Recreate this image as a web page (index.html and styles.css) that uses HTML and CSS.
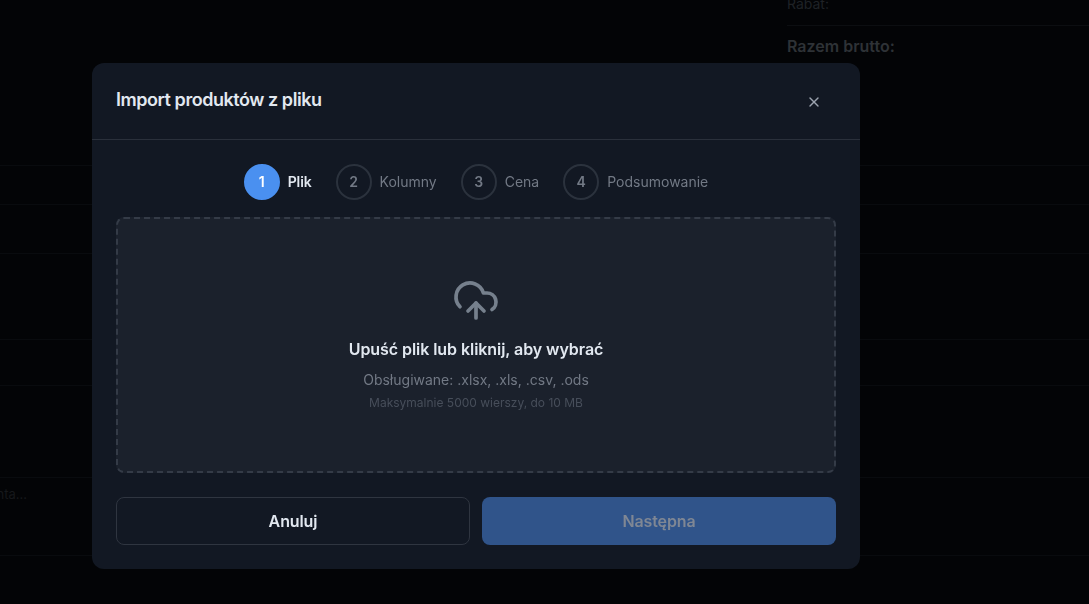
FILE: index.html
```html
<!DOCTYPE html>
<html lang="pl">
<head>
    <meta charset="UTF-8">
    <meta name="viewport" content="width=device-width, initial-scale=1.0">
    <title>Import produktów z pliku</title>
    <link rel="stylesheet" href="styles.css">
</head>
<body>
    <div class="page">
        <div class="summary">
            <div class="summary-row">Rabat:</div>
            <div class="summary-total">Razem brutto:</div>
        </div>
        <div class="row row-40"></div>
        <div class="row row-48"></div>
        <div class="row row-86"></div>
        <div class="row row-46"></div>
        <div class="row row-92"></div>
        <div class="row row-78"><span class="row-note">Uwagi dla klienta...</span></div>
    </div>

    <div class="overlay">
        <div class="modal">
            <div class="modal-header">
                <h2>Import produktów z pliku</h2>
                <button class="close-btn" aria-label="Zamknij">
                    <svg width="16" height="16" viewBox="0 0 24 24" fill="none" stroke="currentColor" stroke-width="2" stroke-linecap="round">
                        <path d="M18 6 6 18"/>
                        <path d="m6 6 12 12"/>
                    </svg>
                </button>
            </div>
            <div class="modal-body">
                <div class="steps">
                    <div class="step active"><span class="step-num">1</span><span class="step-label">Plik</span></div>
                    <div class="step"><span class="step-num">2</span><span class="step-label">Kolumny</span></div>
                    <div class="step"><span class="step-num">3</span><span class="step-label">Cena</span></div>
                    <div class="step"><span class="step-num">4</span><span class="step-label">Podsumowanie</span></div>
                </div>
                <div class="dropzone">
                    <svg class="upload-icon" width="48" height="48" viewBox="0 0 24 24" fill="none" stroke="currentColor" stroke-width="1.85" stroke-linecap="round" stroke-linejoin="round">
                        <path d="M12 13v7.5"/>
                        <path d="M4 14.899A7 7 0 1 1 15.71 8h1.79a4.5 4.5 0 0 1 2.5 8.242"/>
                        <path d="m8 17 4-4 4 4"/>
                    </svg>
                    <div class="drop-title">Upuść plik lub kliknij, aby wybrać</div>
                    <div class="drop-formats">Obsługiwane: .xlsx, .xls, .csv, .ods</div>
                    <div class="drop-limit">Maksymalnie 5000 wierszy, do 10 MB</div>
                </div>
            </div>
            <div class="modal-footer">
                <button class="btn btn-cancel">Anuluj</button>
                <button class="btn btn-next" disabled>Następna</button>
            </div>
        </div>
    </div>
</body>
</html>
```

FILE: styles.css
```css
* {
    box-sizing: border-box;
}
html, body {
    height: 100%;
}
body {
    margin: 0;
    overflow: hidden;
    background-color: #030406;
    font-family: Inter, "Liberation Sans", sans-serif;
}
.page {
    margin-top: -6px;
}
.summary {
    height: 172px;
    padding-left: 787px;
    border-bottom: 1px solid #090b0e;
    color: #1f2226;
    font-size: 14px;
}
.summary-row {
    height: 32px;
    line-height: 20px;
    border-bottom: 1px solid #0c0e11;
}
.summary-total {
    margin-top: 10px;
    font-size: 16px;
    line-height: 20px;
    font-weight: 600;
    color: #2e3236;
}
.row {
    border-bottom: 1px solid #090b0e;
}
.row-40 { height: 39px; }
.row-48 { height: 49px; }
.row-86 { height: 86px; }
.row-46 { height: 46px; }
.row-92 { height: 92px; }
.row-78 {
    height: 78px;
    position: relative;
    overflow: hidden;
}
.row-note {
    position: absolute;
    right: calc(100% - 27px);
    top: 8px;
    white-space: nowrap;
    font-size: 13px;
    color: #16181b;
}
.overlay {
    position: fixed;
    inset: 0;
}
.modal {
    position: absolute;
    left: 92px;
    top: 63px;
    width: 768px;
    height: 506px;
    background-color: #121823;
    border-radius: 12px;
    display: flex;
    flex-direction: column;
}
.modal-header {
    height: 77px;
    padding: 0 24px;
    border-bottom: 1px solid #2a303b;
    display: flex;
    align-items: center;
    justify-content: space-between;
}
.modal-header h2 {
    margin: 0 0 3px;
    font-size: 18px;
    font-weight: 600;
    letter-spacing: -0.025em;
    color: #e2e8f0;
}
.close-btn {
    width: 32px;
    height: 32px;
    margin: 2px 6px 0 0;
    padding: 0;
    border: none;
    background: none;
    color: #9ca3af;
    display: flex;
    align-items: center;
    justify-content: center;
}
.modal-body {
    padding: 24px 24px 0;
}
.steps {
    display: flex;
    justify-content: center;
    gap: 24px;
    margin-bottom: 17px;
}
.step {
    display: flex;
    align-items: center;
    gap: 8px;
    font-size: 14px;
    color: #727985;
}
.step-label {
    padding-bottom: 2px;
}
.step-num {
    width: 36px;
    height: 36px;
    padding-bottom: 2px;
    border: 2px solid #2b323d;
    border-radius: 50%;
    display: flex;
    align-items: center;
    justify-content: center;
    font-weight: 600;
    color: #727985;
}
.step.active {
    font-weight: 600;
    color: #e2e8f0;
}
.step.active .step-label {
    letter-spacing: -0.12px;
}
.step.active .step-num {
    background-color: #4a90f0;
    border-color: #4a90f0;
    color: #fff;
}
.dropzone {
    height: 256px;
    border: 2px dashed #343b47;
    border-radius: 8px;
    background-color: #1b212c;
    display: flex;
    flex-direction: column;
    align-items: center;
}
.upload-icon {
    margin-top: 58px;
    color: #76808d;
}
.drop-title {
    margin-top: 12px;
    font-size: 16px;
    line-height: 24px;
    font-weight: 600;
    letter-spacing: -0.06px;
    color: #e2e8f0;
}
.drop-formats {
    margin-top: 9px;
    font-size: 14px;
    line-height: 20px;
    color: #727985;
}
.drop-limit {
    margin-top: 5px;
    font-size: 12px;
    line-height: 16px;
    color: #474e5a;
}
.modal-footer {
    display: grid;
    grid-template-columns: 1fr 1fr;
    gap: 12px;
    padding: 24px 24px 0;
}
.btn {
    height: 48px;
    border-radius: 8px;
    font-family: inherit;
    font-size: 16px;
    font-weight: 600;
    letter-spacing: -0.1px;
}
.btn-cancel {
    border: 1px solid #2f3540;
    background-color: #121823;
    color: #e2e8f0;
}
.btn-next {
    border: none;
    background-color: #30548a;
    color: #7f8794;
}
```
